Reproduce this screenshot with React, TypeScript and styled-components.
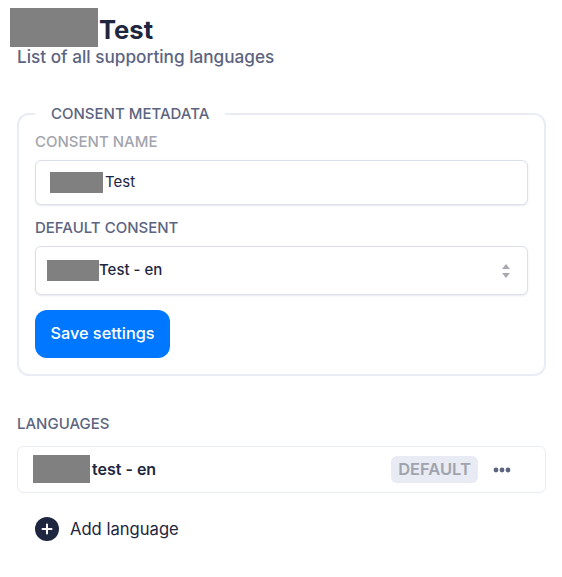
import * as React from "react";
import styled, { createGlobalStyle } from "styled-components";

const GlobalStyle = createGlobalStyle`
    html, body {
        margin: 0;
        padding: 0;
        background: #ffffff;
    }
    body {
        font-family: "Inter", "Liberation Sans", sans-serif;
        color: #1e2640;
    }
`;

const Page = styled.div`
    width: 562px;
    height: 577px;
    box-sizing: border-box;
    padding: 15px 16px 0 17px;
    overflow: hidden;
`;

const Title = styled.h1`
    margin: 0;
    font-size: 25.6px;
    line-height: 30px;
    font-weight: 700;
    color: #1e2640;
`;

const Subtitle = styled.p`
    margin: -1px 0 0;
    font-size: 17.2px;
    line-height: 26px;
    font-weight: 500;
    color: #5c6480;
`;

const Redacted = styled.span<{ $w: number; $h: number; $left?: number; $right?: number; $lift?: number }>`
    display: inline-block;
    width: ${p => p.$w}px;
    height: ${p => p.$h}px;
    margin: -${p => p.$h}px ${p => p.$right || 0}px -${p => p.$h}px ${p => p.$left || 0}px;
    vertical-align: middle;
    transform: translateY(-${p => p.$lift || 0}px);
    background: #808080;
`;

const MetadataCard = styled.fieldset`
    margin: 35px 0 0;
    padding: 11px 16px 16px 16px;
    height: 271px;
    box-sizing: border-box;
    border: 2px solid #e9ecf4;
    border-radius: 12px;
    min-width: 0;
`;

const CardLegend = styled.legend`
    padding: 0 16px 0 16px;
    font-size: 15px;
    line-height: 17px;
    font-weight: 500;
    color: #5c6480;
`;

const Label = styled.div<{ $muted?: boolean }>`
    font-size: 15px;
    line-height: 18px;
    font-weight: 500;
    color: ${p => (p.$muted ? "#a3a5ae" : "#5c6480")};
`;

const Field = styled.div<{ $h: number; $pad: number }>`
    display: flex;
    align-items: center;
    justify-content: space-between;
    height: ${p => p.$h}px;
    box-sizing: border-box;
    margin: 9px 0 14px;
    padding: 0 17px 0 ${p => p.$pad}px;
    background: #ffffff;
    border: 1px solid #dcdfee;
    border-radius: 6px;
    box-shadow: 0 1px 2px rgba(30, 38, 64, 0.1);
    font-size: 15px;
    color: #1e2640;
`;

const FieldText = styled.span<{ $medium?: boolean }>`
    margin-bottom: 2px;
    font-weight: ${p => (p.$medium ? 500 : 400)};
    white-space: nowrap;
`;

const SaveButton = styled.button`
    display: block;
    width: 135px;
    height: 48px;
    margin-top: 15px;
    padding: 0 0 2px;
    border: none;
    border-radius: 12px;
    background: #0077ff;
    color: #ffffff;
    font-family: inherit;
    font-size: 16.3px;
    font-weight: 500;
`;

const SectionLabel = styled(Label)`
    margin-top: 39px;
`;

const LanguageRow = styled.div`
    display: flex;
    align-items: center;
    height: 47px;
    box-sizing: border-box;
    margin-top: 13px;
    padding: 0 34px 0 15px;
    border: 1px solid #e9ecf4;
    border-radius: 6px;
`;

const LanguageName = styled.span`
    flex: 1;
    margin-bottom: 2px;
    font-size: 16px;
    font-weight: 600;
    color: #1e2640;
`;

const Badge = styled.span`
    display: flex;
    align-items: center;
    justify-content: center;
    width: 87px;
    height: 27px;
    margin-right: 15px;
    padding-bottom: 2px;
    box-sizing: border-box;
    border-radius: 6px;
    background: #e8ebf3;
    color: #a0a3ad;
    font-size: 16.5px;
    font-weight: 600;
`;

const AddLanguage = styled.div`
    display: flex;
    align-items: center;
    gap: 11px;
    margin: 24px 0 0 18px;
    font-size: 16.6px;
    color: #1e2640;
`;

const Stepper = () => (
    <svg width="8" height="14" viewBox="0 0 8 14" fill="#a8aab2">
        <path d="M4 0 L8 5 H0 Z" />
        <path d="M4 14 L0 9 H8 Z" />
    </svg>
);

const Dots = () => (
    <svg width="18" height="6" viewBox="0 0 18 6" fill="#5c6480">
        <circle cx="3" cy="3" r="2.4" />
        <circle cx="9" cy="3" r="2.4" />
        <circle cx="15" cy="3" r="2.4" />
    </svg>
);

const PlusCircle = () => (
    <svg width="24" height="24" viewBox="0 0 24 24">
        <circle cx="12" cy="12" r="12" fill="#1e2640" />
        <path d="M12 7.5 V16.5 M7.5 12 H16.5" stroke="#ffffff" strokeWidth="2" strokeLinecap="round" />
    </svg>
);

const App = () => {
    return (
        <Page>
            <GlobalStyle />
            <Title><Redacted $w={88} $h={39} $left={-7} $right={1} $lift={5} />Test</Title>
            <Subtitle>List of all supporting languages</Subtitle>
            <MetadataCard>
                <CardLegend>CONSENT METADATA</CardLegend>
                <Label $muted>CONSENT NAME</Label>
                <Field $h={45} $pad={14}>
                    <FieldText><Redacted $w={53} $h={21} $right={2} />Test</FieldText>
                </Field>
                <Label>DEFAULT CONSENT</Label>
                <Field $h={49} $pad={11}>
                    <FieldText $medium><Redacted $w={52} $h={21} />Test - en</FieldText>
                    <Stepper />
                </Field>
                <SaveButton>Save settings</SaveButton>
            </MetadataCard>
            <SectionLabel>LANGUAGES</SectionLabel>
            <LanguageRow>
                <LanguageName><Redacted $w={57} $h={28} $right={2} $lift={1} />test - en</LanguageName>
                <Badge>DEFAULT</Badge>
                <Dots />
            </LanguageRow>
            <AddLanguage>
                <PlusCircle />
                Add language
            </AddLanguage>
        </Page>
    );
};

export default App;
